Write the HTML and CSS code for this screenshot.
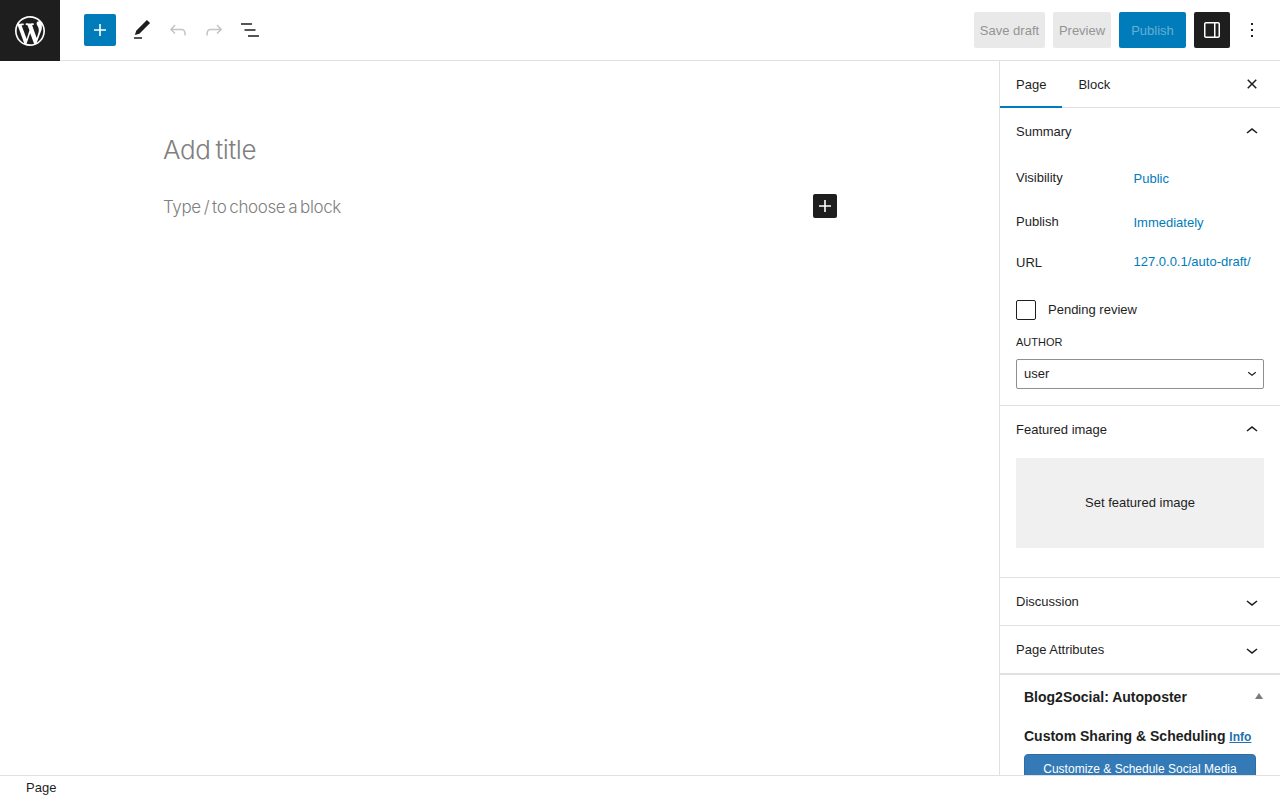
FILE: index.html
```html
<!DOCTYPE html>
<html lang="en">
<head>
<meta charset="utf-8">
<title>Add New Page</title>
<link rel="stylesheet" href="styles.css">
</head>
<body>
<div class="app">
  <header class="topbar">
    <a class="wp-logo" href="#"><svg viewBox="-2 -2 24 24" width="36" height="36"><path fill="#fff" d="M20 10c0-5.51-4.49-10-10-10C4.48 0 0 4.49 0 10c0 5.52 4.48 10 10 10 5.51 0 10-4.48 10-10zM7.78 15.37L4.37 6.22c.55-.02 1.17-.08 1.17-.08.5-.06.44-1.13-.06-1.11 0 0-1.45.11-2.37.11-.18 0-.37 0-.58-.01C4.12 2.69 6.87 1.11 10 1.11c2.33 0 4.45.87 6.05 2.34-.68-.11-1.65.39-1.65 1.58 0 .74.45 1.36.9 2.1.35.61.55 1.36.55 2.46 0 1.49-1.4 5-1.4 5l-3.03-8.37c.54-.02.82-.17.82-.17.5-.05.44-1.25-.06-1.22 0 0-1.44.12-2.38.12-.87 0-2.33-.12-2.33-.12-.5-.03-.56 1.2-.06 1.22l.92.08 1.26 3.41zM17.41 10c.24-.64.74-1.87.43-4.25.7 1.29 1.05 2.71 1.05 4.25 0 3.29-1.73 6.24-4.4 7.78.97-2.59 1.94-5.2 2.92-7.78zM6.1 18.09C3.12 16.65 1.11 13.53 1.11 10c0-1.3.23-2.48.72-3.59C3.25 10.3 4.67 14.2 6.1 18.09zm4.03-6.63l2.58 6.98c-.86.29-1.76.45-2.71.45-.79 0-1.57-.11-2.29-.33.81-2.38 1.62-4.74 2.42-7.1z"/></svg></a>
    <div class="tools">
      <button class="inserter"><svg viewBox="0 0 24 24" width="24" height="24"><path fill="#fff" d="M18 11.2h-5.2V6h-1.6v5.2H6v1.6h5.2V18h1.6v-5.2H18z"/></svg></button>
      <button class="tool"><svg viewBox="0 0 24 24" width="24" height="24"><path fill="#1e1e1e" d="M20.1 5.1L16.9 2 6.2 12.7l-1.3 4.4 4.5-1.3L20.1 5.1zM4 20.8h8v-1.5H4v1.5z"/></svg></button>
      <button class="tool"><svg viewBox="0 0 24 24" width="24" height="24"><path fill="#c4c4c4" d="M18.3 11.7c-.6-.6-1.4-.9-2.3-.9H6.7l2.9-3.3-1.1-1-4.5 5L8.5 16l1-1-2.7-2.7H16c.5 0 .9.2 1.3.5 1 1 1 3.4 1 4.5v.3h1.5v-.2c0-1.5 0-4.3-1.5-5.7z"/></svg></button>
      <button class="tool"><svg viewBox="0 0 24 24" width="24" height="24"><path fill="#c4c4c4" d="M15.6 6.5l-1.1 1 2.9 3.3H8c-.9 0-1.7.3-2.3.9-1.4 1.5-1.4 4.2-1.4 5.6v.2h1.5v-.3c0-1.1 0-3.5 1-4.5.3-.3.7-.5 1.3-.5h9.2L14.5 15l1.1 1.1 4.6-4.6-4.6-5z"/></svg></button>
      <button class="tool"><svg viewBox="0 0 24 24" width="24" height="24"><path fill="#1e1e1e" d="M3 5.25h11v1.5H3zm3.5 6h11v1.5h-11zM10 17.25h11v1.5H10z"/></svg></button>
    </div>
    <div class="actions">
      <button class="btn-muted save">Save draft</button>
      <button class="btn-muted preview">Preview</button>
      <button class="btn-publish">Publish</button>
      <button class="btn-panel"><svg viewBox="0 0 24 24" width="24" height="24"><path fill="#fff" d="M18 4H6c-1.1 0-2 .9-2 2v12c0 1.1.9 2 2 2h12c1.1 0 2-.9 2-2V6c0-1.1-.9-2-2-2zm-4 14.5H6c-.3 0-.5-.2-.5-.5V6c0-.3.2-.5.5-.5h8v13zm4.5-.5c0 .3-.2.5-.5.5h-2.5v-13H18c.3 0 .5.2.5.5v12z"/></svg></button>
      <button class="btn-more"><svg viewBox="0 0 24 24" width="24" height="24"><path fill="#1e1e1e" d="M13 19h-2v-2h2v2zm0-6h-2v-2h2v2zm0-6h-2V5h2v2z"/></svg></button>
    </div>
  </header>

  <div class="workspace">
    <main class="editor">
      <h1 class="post-title">Add title</h1>
      <div class="block-row">
        <p class="placeholder">Type / to choose a block</p>
        <button class="block-add"><svg viewBox="0 0 24 24" width="24" height="24"><path fill="#fff" d="M18 11.2h-5.2V6h-1.6v5.2H6v1.6h5.2V18h1.6v-5.2H18z"/></svg></button>
      </div>
    </main>

    <aside class="sidebar">
      <div class="tabs">
        <button class="tab active">Page</button>
        <button class="tab">Block</button>
        <button class="close"><svg viewBox="0 0 24 24" width="24" height="24"><path fill="#1e1e1e" d="M12 13.06l3.712 3.713 1.061-1.06L13.061 12l3.712-3.712-1.06-1.06L12 10.938 8.288 7.227l-1.061 1.06L10.939 12l-3.712 3.712 1.06 1.061L12 13.061z"/></svg></button>
      </div>

      <section class="panel summary">
        <div class="panel-head"><span>Summary</span><svg viewBox="0 0 24 24" width="24" height="24"><path fill="#1e1e1e" d="M6.5 12.4L12 8l5.5 4.4-.9 1.2L12 10l-4.5 3.6-1-1.2z"/></svg></div>
        <div class="rows">
          <div class="row row-visibility"><span class="key">Visibility</span><a class="val" href="#">Public</a></div>
          <div class="row row-publish"><span class="key">Publish</span><a class="val" href="#">Immediately</a></div>
          <div class="row row-url"><span class="key">URL</span><a class="val" href="#">127.0.0.1/auto-draft/</a></div>
        </div>
        <label class="pending"><span class="check"></span><span class="pending-text">Pending review</span></label>
        <div class="author-label">AUTHOR</div>
        <div class="select"><span>user</span><svg viewBox="0 0 24 24" width="18" height="18"><path fill="#1e1e1e" d="M17.5 11.6L12 16l-5.5-4.4.9-1.2L12 14l4.5-3.6 1 1.2z"/></svg></div>
      </section>

      <section class="panel featured">
        <div class="panel-head"><span>Featured image</span><svg viewBox="0 0 24 24" width="24" height="24"><path fill="#1e1e1e" d="M6.5 12.4L12 8l5.5 4.4-.9 1.2L12 10l-4.5 3.6-1-1.2z"/></svg></div>
        <div class="image-box">Set featured image</div>
      </section>

      <section class="panel closed">
        <div class="panel-head"><span>Discussion</span><svg viewBox="0 0 24 24" width="24" height="24"><path fill="#1e1e1e" d="M17.5 11.6L12 16l-5.5-4.4.9-1.2L12 14l4.5-3.6 1 1.2z"/></svg></div>
      </section>
      <section class="panel closed">
        <div class="panel-head"><span>Page Attributes</span><svg viewBox="0 0 24 24" width="24" height="24"><path fill="#1e1e1e" d="M17.5 11.6L12 16l-5.5-4.4.9-1.2L12 14l4.5-3.6 1 1.2z"/></svg></div>
      </section>

      <section class="metabox">
        <div class="metabox-head"><h2>Blog2Social: Autoposter</h2><span class="triangle"></span></div>
        <h3 class="sharing">Custom Sharing &amp; Scheduling <a href="#">Info</a></h3>
        <button class="schedule">Customize &amp; Schedule Social Media</button>
      </section>
    </aside>
  </div>

  <footer class="statusbar">Page</footer>
</div>
</body>
</html>
```
FILE: styles.css
```css
* { box-sizing: border-box; }
html, body { margin: 0; height: 100%; overflow: hidden; }
body { font-family: "Liberation Sans", Arial, sans-serif; font-size: 13px; color: #1e1e1e; background: #fff; }
button { font: inherit; border: 0; background: none; padding: 0; margin: 0; cursor: pointer; }
svg { display: block; }
a { text-decoration: none; }

.app { display: flex; flex-direction: column; height: 800px; }

.topbar { flex: 0 0 61px; height: 61px; display: flex; align-items: center; border-bottom: 1px solid #e0e0e0; }
.wp-logo { width: 60px; height: 61px; margin-bottom: -1px; background: #1e1e1e; display: flex; align-items: center; justify-content: center; align-self: flex-start; }
.tools { display: flex; align-items: center; margin-left: 24px; }
.inserter { width: 32px; height: 32px; background: #007cba; border-radius: 2px; display: flex; align-items: center; justify-content: center; }
.tool { width: 24px; height: 36px; display: flex; align-items: center; justify-content: center; margin-left: 12px; }
.tools .inserter + .tool { margin-left: 14px; }
.actions { margin-left: auto; display: flex; align-items: center; gap: 8px; padding-right: 8px; }
.btn-muted { height: 36px; background: #e9e9e9; color: #949494; border-radius: 2px; }
.save { width: 71px; }
.preview { width: 58px; }
.btn-publish { height: 36px; width: 67px; background: #007cba; color: #66b0d6; border-radius: 2px; }
.btn-panel { width: 36px; height: 36px; background: #1e1e1e; border-radius: 2px; display: flex; align-items: center; justify-content: center; }
.btn-more { width: 24px; height: 36px; display: flex; align-items: center; justify-content: center; margin: 0 8px 0 2px; }

.workspace { flex: 1 1 0; min-height: 0; display: flex; }
.editor { flex: 1 1 0; min-width: 0; padding: 72px 163px 0; }
.post-title { margin: 0; font: 300 26px/34px Inter, sans-serif; color: #808080; letter-spacing: -.4px; word-spacing: -2px; }
.block-row { margin-top: 24px; width: 674px; display: flex; align-items: center; justify-content: space-between; }
.placeholder { margin: 1px 0 0; font: 300 17px/30px Inter, sans-serif; color: #808080; letter-spacing: -.38px; word-spacing: -1.5px; }
.block-add { width: 24px; height: 24px; margin-bottom: 1px; background: #1e1e1e; border-radius: 2px; }

.sidebar { flex: 0 0 281px; border-left: 1px solid #e0e0e0; overflow: hidden; }
.tabs { height: 47px; display: flex; border-bottom: 1px solid #e0e0e0; }
.tab { height: 47px; padding: 0 16px; color: #1e1e1e; }
.tab.active { box-shadow: inset 0 -2px 0 #007cba; }
.close { margin-left: auto; margin-right: 16px; height: 46px; }

.panel { border-bottom: 1px solid #e0e0e0; }
.panel-head { height: 47px; padding: 0 16px; display: flex; align-items: center; justify-content: space-between; }
.closed { height: 48px; }
.summary { height: 298px; }
.rows { padding-top: 1px; }
.row { display: flex; padding: 0 16px; }
.key { width: 117.5px; }
.val { color: #007cba; }
.row-visibility { height: 44px; padding-top: 14px; }
.row-visibility .val, .row-publish .val { position: relative; top: 1px; }
.row-publish { height: 41px; padding-top: 14px; }
.row-url { height: 59px; padding-top: 14px; }
.row-url .val { position: relative; top: -1px; }
.pending { display: flex; align-items: center; gap: 12px; padding: 0 16px; height: 20px; }
.pending-text { padding-bottom: 2px; }
.check { width: 20px; height: 20px; border: 1px solid #1e1e1e; border-radius: 2px; }
.author-label { margin: 10px 16px 0; font-size: 11px; line-height: 24px; }
.select { margin: 5px 16px 0; height: 30px; padding: 0 2px 2px 7px; border: 1px solid #8c8f94; border-radius: 2px; display: flex; align-items: center; justify-content: space-between; }

.featured { height: 172px; }
.image-box { margin: 5px 16px 0; height: 90px; padding-bottom: 2px; background: #f0f0f0; display: flex; align-items: center; justify-content: center; }

.metabox { border-top: 1px solid #e0e0e0; padding: 0 16px 0 24px; }
.metabox-head { height: 44px; display: flex; align-items: center; justify-content: space-between; }
.metabox-head h2 { margin: 0; font-size: 14px; font-weight: 700; }
.triangle { width: 0; height: 0; border: 4px solid transparent; border-top: 0; border-bottom: 6px solid #787c82; position: relative; top: -1px; margin-right: 1px; }
.sharing { margin: 6px 0 0; font-size: 14px; line-height: 22px; font-weight: 700; white-space: nowrap; }
.sharing a { font-size: 12px; color: #2271b1; text-decoration: underline; }
.schedule { display: block; width: 232px; margin-top: 6px; background: #337ab7; color: #fff; font-size: 12px; line-height: 17px; padding: 6px 12px; border: 1px solid #2e6da4; border-radius: 4px; white-space: nowrap; }

.statusbar { flex: 0 0 25px; position: relative; border-top: 1px solid #e0e0e0; background: #fff; padding-left: 26px; line-height: 23px; }
```
